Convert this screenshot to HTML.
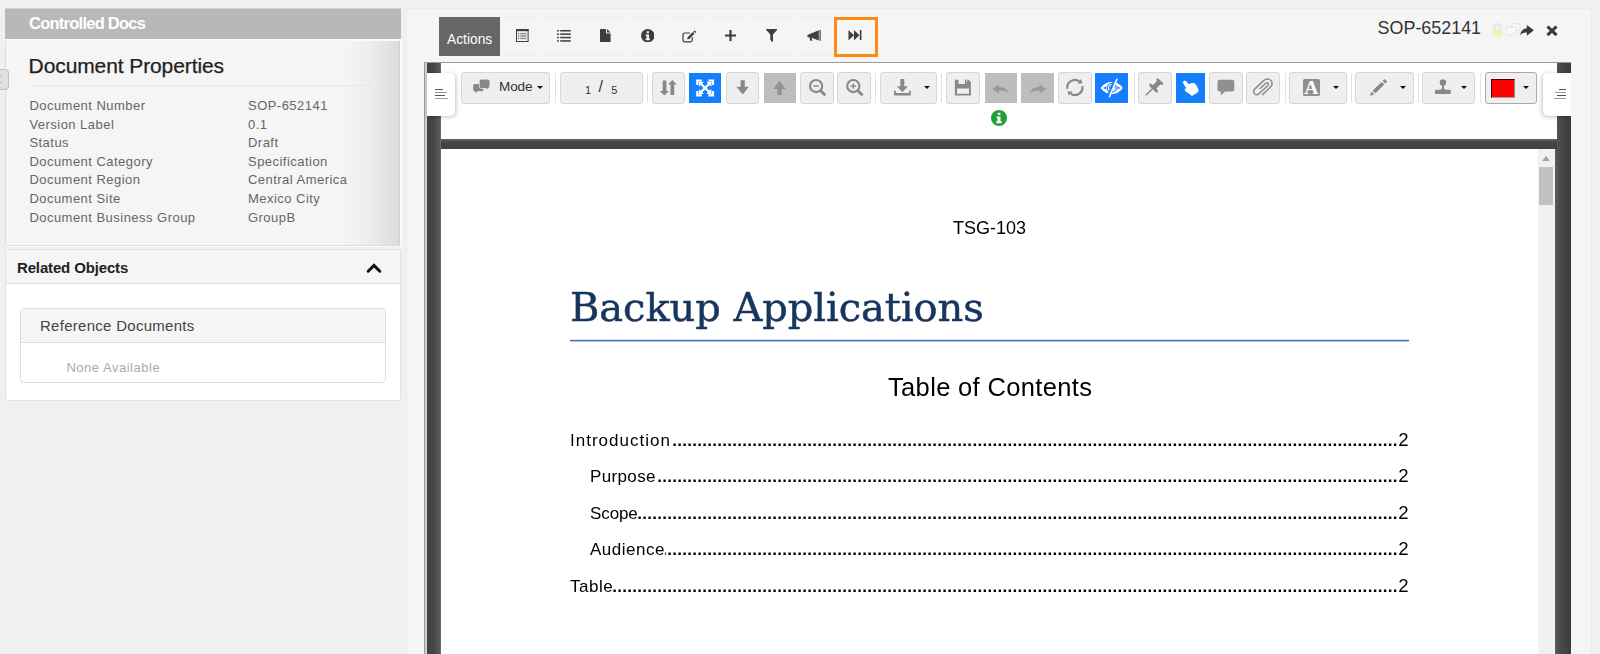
<!DOCTYPE html>
<html lang="en">
<head>
<meta charset="utf-8">
<title>Controlled Docs</title>
<style>
*{box-sizing:border-box;margin:0;padding:0}
html,body{width:1600px;height:654px;overflow:hidden}
body{background:#f0f0f0;font-family:"Liberation Sans",sans-serif;position:relative;color:#333}
.abs{position:absolute}
.t{position:absolute;white-space:nowrap;line-height:1}
/* left column */
#lhead{left:5px;top:8px;width:396px;height:31px;background:linear-gradient(180deg,#d0d0d0 0,#d0d0d0 1px,#b8b8b8 1px)}
#lhead .t{left:24px;top:7px;font-weight:bold;font-size:16.5px;color:#fff;letter-spacing:-0.75px}
#props{left:5px;top:41px;width:395px;height:205px;border-left:1px solid #ddd;border-bottom:1px solid #ddd;
 background:linear-gradient(90deg,#f5f5f5 0,#f5f5f5 86%,#ececec 93%,#dcdcdc 99.6%,#c8c8c8 100%)}
#props h1{position:absolute;left:22.6px;top:14px;font-size:21px;font-weight:normal;color:#222;line-height:1;white-space:nowrap;letter-spacing:-0.1px;-webkit-text-stroke:0.25px #222}
#props .hr{position:absolute;left:24px;top:44px;width:354px;height:1px;background:#e6e6e6}
.row{position:absolute;left:23.4px;margin-top:-1px;font-size:13px;color:#666;line-height:1;white-space:nowrap;letter-spacing:0.47px}
.row b{font-weight:normal;position:absolute;left:218.6px;top:0}
#sidetab{left:-3px;top:69px;width:12px;height:21px;background:#e0e0e0;border:1.5px solid #bdbdbd;border-radius:3.5px}
#rel{left:5px;top:249px;width:396px;height:152px;background:#fff;border:1px solid #e1e1e1;border-radius:3px}
#rel .hd{position:absolute;left:0;top:0;right:0;height:34px;background:#f5f5f5;border-bottom:1px solid #ddd}
#rel .hd .t{left:11px;top:9.5px;font-size:15px;font-weight:bold;color:#222;letter-spacing:-0.15px}
#ref{left:14px;top:58px;width:366px;height:75px;border:1px solid #ddd;border-radius:4px;background:#fff}
#ref .hd2{position:absolute;left:0;top:0;right:0;height:34px;background:#f5f5f5;border-bottom:1px solid #ddd;border-radius:3px 3px 0 0}
#ref .hd2 .t{left:19px;top:8.7px;font-size:15px;color:#444;letter-spacing:0.28px}
#ref .none{left:45.4px;top:51.5px;font-size:13px;color:#aaa;letter-spacing:0.52px}
/* right panel */
#rp{left:406px;top:8px;width:1186px;height:661px;background:#f5f5f5;border:1px solid #ebebeb;border-radius:5px}
#actions{left:439px;top:17px;width:61px;height:39.4px;background:#666;color:#fff}
#actions .t{left:8px;top:15.7px;font-size:13.8px;color:#fff}
.ib{position:absolute;top:17px;width:38px;height:38px;border-top:1px solid #ebebeb;border-bottom:1px solid #ebebeb}
.ib svg{position:absolute;left:50%;top:calc(50% - 0.9px)}
#hl{left:834px;top:16.8px;width:44px;height:40px;border:3.5px solid #ff8a12}
#docno{left:1377.6px;top:20.3px;font-size:17.9px;color:#333}
/* viewer */
#vw{left:424px;top:62px;width:1147px;height:600px;background:linear-gradient(90deg,#9a9a9a 0,#9a9a9a 1px,#cfcfcf 1px,#cfcfcf 3px,#434343 3px,#434343 9px,#5c5c5c 16px,#777 17px,#444 17px);border-top:1px solid #999}
#tb{left:441px;top:63px;width:1116px;height:77px;background:#fff}
#bar{left:441px;top:139px;width:1116px;height:10px;background:linear-gradient(180deg,#666 0,#444 30%,#444 100%)}
#doc{left:441px;top:149px;width:1097px;height:520px;background:#fff}
#sb{left:1538px;top:149px;width:17px;height:520px;background:#f1f1f1}
#sb .th{position:absolute;left:1px;top:18px;width:14px;height:38px;background:#c1c1c1}
#sb .ar{position:absolute;left:4px;top:7px;width:0;height:0;border-left:4.5px solid transparent;border-right:4.5px solid transparent;border-bottom:5px solid #a3a3a3}
.tab{position:absolute;background:#fff;top:73px;height:43px;box-shadow:1px 1px 4px rgba(0,0,0,.25)}
#ltab{left:427px;width:28px;border-radius:0 5px 5px 0}
#rtab{left:1543px;width:28px;border-radius:5px 0 0 5px;box-shadow:-1px 1px 4px rgba(0,0,0,.25);clip-path:inset(-8px 0 -8px -8px)}
.ln{position:absolute;height:1px}
/* toolbar buttons */
.btn{position:absolute;top:72px;height:32px;background:#efefef;border:1px solid #d6d6d6;border-radius:3px}
.btn.blue{background:#157efb;border-color:#157efb;border-radius:0}
.btn.dis{background:#bdbdbd;border-color:#bdbdbd;border-radius:0}
.btn svg{position:absolute}
.sep{position:absolute;top:73px;width:1px;height:30px;background:#e3e3e3}
.caret{position:absolute;width:0;height:0;border-left:3.7px solid transparent;border-right:3.7px solid transparent;border-top:3.8px solid #111;top:13px}
/* document */
.doc{font-family:"Liberation Sans",sans-serif;color:#000}
.gs,.tl{will-change:transform}
#tsg{left:953.2px;top:218.8px;font-size:18px;color:#000}
#title{left:570px;top:287.2px;font-family:"DejaVu Serif","Liberation Serif",serif;font-size:40px;color:#17365d;letter-spacing:-0.08px;-webkit-text-stroke:0.5px #17365d}
#uline{left:570px;top:339px;width:839px;height:3px;background:linear-gradient(180deg,rgba(63,118,184,.22) 0,rgba(63,118,184,.22) 1px,#3f76b8 1px,#3f76b8 2px,rgba(63,118,184,.42) 2px)}
#toc{left:887.5px;top:375.2px;font-size:25.5px;color:#000;letter-spacing:0.34px}
.tl{position:absolute;font-size:17px;color:#000;line-height:1.4;white-space:nowrap;display:flex;height:24px}
.tl .nm{flex:none}
.tl .dots{flex:1 1 0;min-width:0;overflow:hidden;letter-spacing:0.28px;direction:rtl;text-align:right;font-weight:bold}
.tl .pg{flex:none;padding-left:0.5px;font-size:18.6px;line-height:22px;letter-spacing:-1px}
</style>
</head>
<body>
<!-- LEFT COLUMN -->
<div id="lhead" class="abs"><div class="t">Controlled Docs</div></div>
<div class="abs" style="left:5px;top:39px;width:397px;height:208px;background:#f9f9f9"></div>
<div id="props" class="abs">
  <h1>Document Properties</h1>
  <div class="hr"></div>
  <div class="row" style="top:59px">Document Number<b>SOP-652141</b></div>
  <div class="row" style="top:77.6px">Version Label<b>0.1</b></div>
  <div class="row" style="top:96.2px">Status<b>Draft</b></div>
  <div class="row" style="top:114.8px">Document Category<b>Specification</b></div>
  <div class="row" style="top:133.4px">Document Region<b>Central America</b></div>
  <div class="row" style="top:152px">Document Site<b>Mexico City</b></div>
  <div class="row" style="top:170.6px">Document Business Group<b>GroupB</b></div>
</div>
<div id="sidetab" class="abs"><svg class="abs" style="left:-1.6px;top:3px" width="6" height="13" viewBox="0 0 6 13"><path d="M4.4 1.8 L0.4 5.8 L4.4 9.8" fill="none" stroke="#3f8fd0" stroke-width="1.3"/></svg></div>
<div id="rel" class="abs">
  <div class="hd"><div class="t">Related Objects</div>
    <svg class="abs" style="left:360px;top:12px" width="16" height="12" viewBox="0 0 16 12"><path d="M2.2 9.2 L8 3.4 L13.8 9.2" fill="none" stroke="#111" stroke-width="3" stroke-linecap="round" stroke-linejoin="miter"/></svg>
  </div>
  <div id="ref" class="abs">
    <div class="hd2"><div class="t">Reference Documents</div></div>
    <div class="t none">None Available</div>
  </div>
</div>

<!-- RIGHT PANEL -->
<div id="rp" class="abs"></div>
<div id="actions" class="abs"><div class="t">Actions</div></div>
<div id="iconbar">
<div class="ib" style="left:503.3px"><svg width="12.6" height="13" viewBox="0 0 12.6 13" style="margin-left:-6.3px;margin-top:-6.5px"><rect x="0.5" y="0.5" width="11.6" height="12" fill="none" stroke="#3e3e3e" stroke-width="1"/><rect x="0" y="0" width="12.6" height="2.2" fill="#3e3e3e"/><rect x="2" y="3.9" width="1.2" height="1.3" fill="#3e3e3e" opacity=".8"/><rect x="4.2" y="3.9" width="6.2" height="1.5" fill="#3e3e3e" opacity=".55"/><rect x="2" y="6.3" width="1.2" height="1.3" fill="#3e3e3e" opacity=".8"/><rect x="4.2" y="6.3" width="6.2" height="1.5" fill="#3e3e3e" opacity=".55"/><rect x="2" y="8.7" width="1.2" height="1.3" fill="#3e3e3e" opacity=".8"/><rect x="4.2" y="8.7" width="6.2" height="1.5" fill="#3e3e3e" opacity=".55"/></svg></div>
<div class="ib" style="left:545.1px"><svg width="13.8" height="11.8" viewBox="0 0 13.8 11.8" style="margin-left:-6.9px;margin-top:-5.3px"><rect x="0" y="0" width="1.8" height="1.5" fill="#3e3e3e"/><rect x="3.2" y="0" width="10.6" height="1.5" fill="#3e3e3e"/><rect x="0" y="3.4" width="1.8" height="1.5" fill="#3e3e3e"/><rect x="3.2" y="3.4" width="10.6" height="1.5" fill="#3e3e3e"/><rect x="0" y="6.8" width="1.8" height="1.5" fill="#3e3e3e"/><rect x="3.2" y="6.8" width="10.6" height="1.5" fill="#3e3e3e"/><rect x="0" y="10.2" width="1.8" height="1.5" fill="#3e3e3e"/><rect x="3.2" y="10.2" width="10.6" height="1.5" fill="#3e3e3e"/></svg></div>
<div class="ib" style="left:586.4px"><svg width="11" height="13" viewBox="0 0 11 13" style="margin-left:-5.5px;margin-top:-6.5px"><path d="M0.6 0 H6 V4.6 H10.6 V12.3 a.7 .7 0 0 1 -.7 .7 H.7 a.7 .7 0 0 1 -.7 -.7 V.6 A.6 .6 0 0 1 .6 0 Z M7 0 L10.6 3.6 H7 Z" fill="#3e3e3e"/></svg></div>
<div class="ib" style="left:628.5px"><svg width="13.5" height="13.5" viewBox="0 0 14 14" style="margin-left:-6.8px;margin-top:-6.2px"><circle cx="7" cy="7" r="7" fill="#3e3e3e"/><path d="M5.9 2.3 h2.3 v2.1 h-2.3z M4.9 5.6 h3.4 v4.3 h1 v1.7 h-4.6 v-1.7 h1 v-2.6 h-.8z" fill="#f5f5f5"/></svg></div>
<div class="ib" style="left:669.8px"><svg width="14" height="13" viewBox="0 0 14 13" style="margin-left:-7.0px;margin-top:-5.6px"><path d="M10.2 7.6 V10.3 a1.6 1.6 0 0 1 -1.6 1.6 H2.6 a1.6 1.6 0 0 1 -1.6 -1.6 V4.6 a1.6 1.6 0 0 1 1.6 -1.6 H7.6" fill="none" stroke="#3e3e3e" stroke-width="1.2" stroke-linecap="round"/><path d="M5.2 9.3 L5.6 7.2 L10.9 1.9 L12.6 3.6 L7.3 8.9 Z M11.5 1.3 l.6 -.6 a.6 .6 0 0 1 .85 0 l.85 .85 a.6 .6 0 0 1 0 .85 l-.6 .6 z" fill="#3e3e3e"/></svg></div>
<div class="ib" style="left:711.0px"><svg width="11" height="11" viewBox="0 0 11 11" style="margin-left:-5.5px;margin-top:-5.5px"><path d="M4.4 0 h2.2 v4.4 h4.4 v2.2 h-4.4 v4.4 h-2.2 v-4.4 h-4.4 v-2.2 h4.4z" fill="#3e3e3e"/></svg></div>
<div class="ib" style="left:752.7px"><svg preserveAspectRatio="none" width="11.3" height="13" viewBox="0 0 12 13" style="margin-left:-5.7px;margin-top:-6.5px"><path d="M0.3 0 H11.7 a.4 .4 0 0 1 .28 .68 L7.4 5.4 V12.6 a.4 .4 0 0 1 -.68 .28 L4.8 10.9 a.7 .7 0 0 1 -.2 -.5 V5.4 L0.02 .68 A.4 .4 0 0 1 .3 0Z" fill="#3e3e3e"/></svg></div>
<div class="ib" style="left:794.9px"><svg width="14.6" height="11" viewBox="0 0 14.6 11" style="margin-left:-7.3px;margin-top:-5.5px"><path d="M0.4 5 L11.8 0.3 V10.4 L4.6 7.7 L5.4 10.8 H3.3 L2.3 7.3 L0.4 6.9Z" fill="#3e3e3e"/><rect x="12.3" y="0" width="2" height="10.8" fill="#777"/></svg></div>
<div class="ib" style="left:836.5px"><svg width="14.2" height="10.4" viewBox="0 0 14 11" style="margin-left:-7.1px;margin-top:-5.2px"><path d="M0 0 L5.8 5.5 L0 11Z M5.8 0 L11.6 5.5 L5.8 11Z" fill="#3e3e3e"/><rect x="12" y="0" width="1.7" height="11" fill="#3e3e3e"/></svg></div>
</div><!--/iconbar-->
<div id="hl" class="abs"></div>
<div id="docno" class="t">SOP-652141</div>
<div id="hdricons">
<svg class="abs" style="left:1492px;top:23px" width="11" height="14" viewBox="0 0 11 14"><path d="M2.6 6.5 V4.1 a2.9 2.9 0 0 1 5.8 0 V6.5" fill="none" stroke="#e6e6e4" stroke-width="2.3"/><rect x="0.3" y="6.2" width="10.4" height="7" rx="1" fill="#f6f2bd"/></svg>
<svg class="abs" style="left:1506px;top:23px" width="15" height="14" viewBox="0 0 15 14"><path d="M4.4 0.6 H12.6 a1.4 1.4 0 0 1 1.4 1.4 V6.6 a1.4 1.4 0 0 1 -1.4 1.4 H11" fill="#f8f8f8" stroke="#e6e6e6" stroke-width="1.2"/><path d="M1.8 4.4 H9 a1.4 1.4 0 0 1 1.4 1.4 V9.6 a1.4 1.4 0 0 1 -1.4 1.4 H6.6 L4.4 13.6 L4 11 H1.8 a1.4 1.4 0 0 1 -1.4 -1.4 V5.8 A1.4 1.4 0 0 1 1.8 4.4Z" fill="#fafafa" stroke="#e6e6e6" stroke-width="1.2"/></svg>
<svg class="abs" style="left:1520.2px;top:25.3px" width="13.9" height="10.75" viewBox="0 0 13.9 10.75"><path d="M6.85 0 L13.9 5.25 L6.85 10.75 V7.5 C4 7.5 1.8 8.3 0 10.2 C0.8 5.8 3.4 3.4 6.85 3.2Z" fill="#3a3a3a"/></svg>
<svg class="abs" style="left:1546px;top:24.6px" width="12" height="11.6" viewBox="0 0 12 12" preserveAspectRatio="none"><path d="M1.5 1.5 L10.5 10.5 M10.5 1.5 L1.5 10.5" stroke="#3a3a3a" stroke-width="3.1" stroke-linecap="butt"/></svg>
</div><!--/hdricons-->

<!-- VIEWER -->
<div id="vw" class="abs"></div>
<div class="abs" style="left:1555px;top:63px;width:16px;height:600px;background:linear-gradient(90deg,#5e5e5e 0,#4a4a4a 5px,#3c3c3c 100%)"></div>
<div id="tb" class="abs"></div>
<div id="bar" class="abs"></div>
<div id="doc" class="abs"></div>
<div id="sb" class="abs"><div class="ar"></div><div class="th"></div></div>
<div id="ltab" class="tab">
  <div class="ln" style="left:8px;top:16px;width:8px;background:#555"></div>
  <div class="ln" style="left:8px;top:19px;width:12px;background:#999"></div>
  <div class="ln" style="left:8px;top:22px;width:10px;background:#555"></div>
  <div class="ln" style="left:8px;top:25px;width:13px;background:#999"></div>
</div>
<div id="rtab" class="tab">
  <div class="ln" style="left:16px;top:16px;width:7.4px;background:#555"></div>
  <div class="ln" style="left:12px;top:19px;width:11.4px;background:#999"></div>
  <div class="ln" style="left:14px;top:22px;width:9.4px;background:#555"></div>
  <div class="ln" style="left:11px;top:25px;width:12.4px;background:#999"></div>
</div>
<div id="toolbar">
<div class="btn " style="left:460.6px;width:89.4px;top:72.4px;height:31.2px;"><svg style="left:-1px;top:-1px" width="89.4" height="31.2" viewBox="0 0 89.4 31.2"><path d="M13.8 12 H20.8 a1.7 1.7 0 0 1 1.7 1.7 V17.5 a1.7 1.7 0 0 1 -1.7 1.7 H16.4 L14.3 21.4 V19.2 H13.8 a1.7 1.7 0 0 1 -1.7 -1.7 V13.7 a1.7 1.7 0 0 1 1.7 -1.7Z" fill="#888"/><path d="M20.3 7.4 H26.8 a1.7 1.7 0 0 1 1.7 1.7 V14.3 a1.7 1.7 0 0 1 -1.7 1.7 H26.5 V17.6 L24.7 16 H20.3 a1.7 1.7 0 0 1 -1.7 -1.7 V9.1 a1.7 1.7 0 0 1 1.7 -1.7Z" fill="#888" stroke="#efefef" stroke-width="1.4" paint-order="stroke"/></svg><div class="t" style="left:37.4px;top:6.7px;font-size:13.5px;color:#333;letter-spacing:-0.1px">Mode</div><div class="caret" style="left:75.3px;top:12.9px"></div></div>
<div class="sep" style="left:554.5px"></div>
<div class="btn " style="left:559.5px;width:83.0px;top:72.4px;height:31.2px;"><div class="t" style="left:24.5px;top:11.8px;font-size:11px;color:#333">1</div><div class="t" style="left:38px;top:5.6px;font-size:16px;color:#333">/</div><div class="t" style="left:50.8px;top:11.8px;font-size:11px;color:#333">5</div></div>
<div class="sep" style="left:646.5px"></div>
<div class="btn " style="left:651.5px;width:33.0px;top:72.4px;height:31.2px;"><svg style="left:-1px;top:-1px" width="33.0" height="31.2" viewBox="0 0 33.0 31.2"><path d="M10.7 8.4 H14.4 V18.9 H17.1 L12.4 23.6 L7.7 18.9 H10.7Z M18.5 23.1 H22.2 V12.6 H24.7 L20.3 8.1 L16 12.6 H18.5Z" fill="#888"/></svg></div>
<div class="btn blue" style="left:689.0px;width:32.4px;top:73px;height:30px;"><svg style="left:-1px;top:-1px" width="32.4" height="30" viewBox="0 0 32.4 30"><path d="M8.3 12 V7.5 H12.9 M19.4 7.5 H24 V12 M24 17.9 V22.4 H19.4 M12.9 22.4 H8.3 V17.9" fill="none" stroke="#fff" stroke-width="2.2"/><path d="M11.4 10.2 L20.9 19.6 M20.9 10.2 L11.4 19.6" stroke="#fff" stroke-width="2.3"/><path d="M9.9 8.8 H15 L9.9 13.8Z M22.4 8.8 V13.8 L17.3 8.8Z M22.4 21 H17.3 L22.4 16Z M9.9 21 V16 L15 21Z" fill="#fff"/></svg></div>
<div class="btn " style="left:725.5px;width:33.5px;top:72.4px;height:31.2px;"><svg style="left:-1px;top:-1px" width="33.5" height="31.2" viewBox="0 0 33.5 31.2"><path d="M14.6 8.3 H18.8 V14.8 H22.9 L16.7 22.6 L10.4 14.8 H14.6Z" fill="#888"/></svg></div>
<div class="btn dis" style="left:763.8px;width:32.1px;top:73px;height:30px;"><svg style="left:-1px;top:-1px" width="32.1" height="30" viewBox="0 0 32.1 30"><path d="M13.3 22 H17.7 V15.9 H21.8 L15.5 7.8 L9.1 15.9 H13.3Z" fill="#939393"/></svg></div>
<div class="btn " style="left:799.5px;width:34.0px;top:72.4px;height:31.2px;"><svg style="left:-1px;top:-1px" width="34.0" height="31.2" viewBox="0 0 34.0 31.2"><circle cx="16.1" cy="14.05" r="6.1" fill="none" stroke="#888" stroke-width="2.1"/><path d="M20.700000000000003 18.65 L25.3 23.25" stroke="#888" stroke-width="2.8"/><path d="M13.3 14.05 H18.900000000000002" stroke="#888" stroke-width="1.5"/></svg></div>
<div class="btn " style="left:836.5px;width:34.0px;top:72.4px;height:31.2px;"><svg style="left:-1px;top:-1px" width="34.0" height="31.2" viewBox="0 0 34.0 31.2"><circle cx="16.3" cy="14.05" r="6.1" fill="none" stroke="#888" stroke-width="2.1"/><path d="M20.9 18.65 L25.5 23.25" stroke="#888" stroke-width="2.8"/><path d="M13.5 14.05 H19.1" stroke="#888" stroke-width="1.5"/><path d="M16.3 11.4 V16.7" stroke="#888" stroke-width="1.5"/></svg></div>
<div class="sep" style="left:874.6px"></div>
<div class="btn " style="left:879.8px;width:56.9px;top:72.4px;height:31.2px;"><svg style="left:-1px;top:-1px" width="56.9" height="31.2" viewBox="0 0 56.9 31.2"><path d="M20.4 7.1 H24.3 V14.2 H27.9 L22.4 20.3 L16.9 14.2 H20.4Z" fill="#888"/><path d="M14 18.8 H15.8 V21 H29 V18.8 H30.8 V23.5 H14Z" fill="#888"/></svg><div class="caret" style="left:43.0px;top:12.9px"></div></div>
<div class="sep" style="left:941.2px"></div>
<div class="btn " style="left:946.2px;width:33.6px;top:72.4px;height:31.2px;"><svg style="left:-1px;top:-1px" width="33.6" height="31.2" viewBox="0 0 33.6 31.2"><path fill-rule="evenodd" d="M8.9 7.8 H12.5 V12.1 H18.9 V7.8 H22.6 L24.9 10.1 V23.5 H8.9Z M11 16.4 V21.8 H23 V16.4Z" fill="#888"/><rect x="20" y="7.8" width="1.3" height="2.6" fill="#c9c9c9"/></svg></div>
<div class="btn dis" style="left:984.8px;width:31.9px;top:73px;height:30px;"><svg style="left:-1px;top:-1px" width="31.9" height="30" viewBox="0 0 31.9 30"><path d="M7.4 15.9 L14 11.2 V14 C19.2 14.1 22.4 16 24.2 20.4 C21.4 17.9 18.2 17.3 14 17.6 V20.6Z" fill="#999"/></svg></div>
<div class="btn dis" style="left:1021.0px;width:32.8px;top:73px;height:30px;"><svg style="left:-1px;top:-1px" width="32.8" height="30" viewBox="0 0 32.8 30"><path d="M25.2 15.9 L18.6 11.2 V14 C13.4 14.1 10.2 16 8.4 20.4 C11.2 17.9 14.4 17.3 18.6 17.6 V20.6Z" fill="#999"/></svg></div>
<div class="btn " style="left:1057.5px;width:34.0px;top:72.4px;height:31.2px;"><svg style="left:-1px;top:-1px" width="34.0" height="31.2" viewBox="0 0 34.0 31.2"><path d="M9.37 16.82 A7.6 7.6 0 0 1 21.21 9.27" fill="none" stroke="#888" stroke-width="2.2"/><path d="M22.95 6.90 L24.45 11.60 L19.55 11.60Z" fill="#888"/><path d="M24.33 14.18 A7.6 7.6 0 0 1 12.49 21.73" fill="none" stroke="#888" stroke-width="2.2"/><path d="M10.45 23.60 L9.55 19.40 L14.65 19.20Z" fill="#888"/></svg></div>
<div class="btn blue" style="left:1095.3px;width:32.7px;top:73px;height:30px;"><svg style="left:-1px;top:-1px" width="32.7" height="30" viewBox="0 0 32.7 30"><path d="M5.75 14.90 C8.75 10.50 12.75 8.90 16.75 8.90 C20.75 8.90 24.75 10.50 27.75 14.90 C24.75 19.30 20.75 20.90 16.75 20.90 C12.75 20.90 8.75 19.30 5.75 14.90Z" fill="#fff"/><circle cx="16.75" cy="14.9" r="4.4" fill="none" stroke="#157efb" stroke-width="1.2"/><path d="M14.55 15.50 A2.3 2.3 0 0 1 16.55 12.70" fill="none" stroke="#157efb" stroke-width="1.1"/><path d="M8.15 14.90 L11.15 13.30 L11.15 16.50Z M25.35 14.90 L22.35 13.30 L22.35 16.50Z" fill="#157efb"/><path d="M20.65 6.50 L13.35 23.70" stroke="#157efb" stroke-width="3.6"/><path d="M21.85 6.30 L14.55 23.50" stroke="#fff" stroke-width="1.7" stroke-linecap="round"/></svg></div>
<div class="sep" style="left:1133.5px"></div>
<div class="btn " style="left:1138.0px;width:33.8px;top:72.4px;height:31.2px;"><svg style="left:-1px;top:-1px" width="33.8" height="31.2" viewBox="0 0 33.8 31.2"><path d="M8.3 22.7 L15.5 15.7" stroke="#888" stroke-width="1.5" stroke-linecap="round"/><path d="M12.6 13.2 L18.6 19" stroke="#888" stroke-width="3" stroke-linecap="round"/><path d="M15.6 16 L21.5 9.9" stroke="#888" stroke-width="4.8"/><path d="M19.6 7.8 L23.9 11.7" stroke="#888" stroke-width="2.6" stroke-linecap="round"/></svg></div>
<div class="btn blue" style="left:1175.8px;width:29.7px;top:73px;height:30px;"><svg style="left:-1px;top:-1px" width="29.7" height="30" viewBox="0 0 29.7 30"><path d="M7.92 8.3 L9.39 8.06 L12.82 11.73 L15.51 10.5 L18.69 10.75 L20.4 13.19 L22.12 17.11 L21.87 18.82 L16.0 22.5 L12.82 20.05 L9.39 17.84 L9.15 16.62 L10.6 14.9 L7.19 9.52Z" fill="#fff" stroke="#fff" stroke-width="1" stroke-linejoin="round"/></svg></div>
<div class="btn " style="left:1209.3px;width:33.4px;top:72.4px;height:31.2px;"><svg style="left:-1px;top:-1px" width="33.4" height="31.2" viewBox="0 0 33.4 31.2"><path d="M10.5 7.7 H23.3 a2 2 0 0 1 2 2 V17.6 a2 2 0 0 1 -2 2 H16 L11.9 23.6 L11.7 19.6 H10.5 a2 2 0 0 1 -2 -2 V9.7 a2 2 0 0 1 2 -2Z" fill="#909090"/></svg></div>
<div class="btn " style="left:1246.3px;width:33.5px;top:72.4px;height:31.2px;"><svg style="left:-1px;top:-1px" width="33.5" height="31.2" viewBox="0 0 33.5 31.2"><path d="M16.5 22.6 L24.3 15.3 C27 12.6 26.4 9.4 24.4 8 C22.4 6.6 19.8 6.8 17.9 8.4 L9.1 16.6 C7 18.6 7.4 20.8 8.6 22 C9.9 23.2 12 23 13.5 21.2 L21.6 13.8 C22.8 12.6 22.6 11.6 22 11.1 C21.3 10.6 20.6 10.7 19.8 11.3 L14 16.5" fill="none" stroke="#8a8a8a" stroke-width="1.5" stroke-linecap="round"/></svg></div>
<div class="sep" style="left:1284.5px"></div>
<div class="btn " style="left:1289.0px;width:57.8px;top:72.4px;height:31.2px;"><div class="abs" style="left:13.4px;top:5.9px;width:17.1px;height:16.7px;background:#8f8f8f;border-radius:1.5px"></div><div class="t" style="left:14.3px;top:4.2px;font-family:'Liberation Serif',serif;font-weight:bold;font-size:19.5px;color:#fff">A</div><div class="caret" style="left:42.6px;top:12.9px"></div></div>
<div class="sep" style="left:1351.3px"></div>
<div class="btn " style="left:1355.0px;width:58.5px;top:72.4px;height:31.2px;"><svg style="left:-1px;top:-1px" width="58.5" height="31.2" viewBox="0 0 58.5 31.2"><path d="M14.87 23.83 L16.33 19.67 L19.52 22.36Z" fill="#888"/><path d="M17.56 18.69 L26.61 9.88 L29.31 12.57 L20.5 21.14Z" fill="#888"/><path d="M27.59 8.9 L29.55 6.94 L32.24 9.63 L30.28 11.59Z" fill="#888"/></svg><div class="caret" style="left:43.7px;top:12.9px"></div></div>
<div class="sep" style="left:1418.3px"></div>
<div class="btn " style="left:1422.0px;width:53.4px;top:72.4px;height:31.2px;"><svg style="left:-1px;top:-1px" width="53.4" height="31.2" viewBox="0 0 53.4 31.2"><circle cx="20.96" cy="10.6" r="3.25" fill="#888"/><rect x="19.95" y="12.5" width="2" height="4.5" fill="#888"/><path d="M18.7 17.9 C18.9 16.9 19.6 16.4 20.4 16.4 H21.5 C22.3 16.4 23 16.9 23.2 17.9Z" fill="#888"/><rect x="12.9" y="17.7" width="15.9" height="4.4" rx="1" fill="#888"/></svg><div class="caret" style="left:38.3px;top:12.9px"></div></div>
<div class="sep" style="left:1480.4px"></div>
<div class="btn " style="left:1485.0px;width:51.8px;top:72.4px;height:31.2px;border-color:#a9a9a9;"><div class="abs" style="left:4.9px;top:5.4px;width:24px;height:19.2px;background:#f00;border:1px solid #8c8c8c;border-top-color:#400;border-left-color:#300;border-bottom-color:#b99"></div><div class="caret" style="left:36.5px;top:12.2px"></div></div>
<div class="abs" style="left:991px;top:110.2px;width:16px;height:16px"><svg width="16" height="16" viewBox="0 0 14 14" style=""><circle cx="7" cy="7" r="7" fill="#21a038"/><path d="M5.9 2.3 h2.3 v2.1 h-2.3z M4.9 5.6 h3.4 v4.3 h1 v1.7 h-4.6 v-1.7 h1 v-2.6 h-.8z" fill="#fff"/></svg></div>
</div><!--/toolbar-->

<!-- DOCUMENT CONTENT -->
<div id="tsg" class="t doc gs">TSG-103</div>
<div id="title" class="t gs">Backup Applications</div>
<div id="uline" class="abs"></div>
<div id="toc" class="t doc gs">Table of Contents</div>
<div id="toclines">
<div class="tl" style="left:570.4px;top:429.2px;width:837.5px"><span class="nm" style="letter-spacing:1.0px">Introduction</span><span class="dots">......................................................................................................................................................................................................................................</span><span class="pg">2</span></div>
<div class="tl" style="left:590.4px;top:464.6px;width:817.5px"><span class="nm" style="letter-spacing:0.36px">Purpose</span><span class="dots">......................................................................................................................................................................................................................................</span><span class="pg">2</span></div>
<div class="tl" style="left:590.4px;top:501.6px;width:817.5px"><span class="nm" style="letter-spacing:-0.1px">Scope</span><span class="dots">......................................................................................................................................................................................................................................</span><span class="pg">2</span></div>
<div class="tl" style="left:590.4px;top:538.0px;width:817.5px"><span class="nm" style="letter-spacing:0.5px">Audience</span><span class="dots">......................................................................................................................................................................................................................................</span><span class="pg">2</span></div>
<div class="tl" style="left:570.4px;top:575.2px;width:837.5px"><span class="nm" style="letter-spacing:0.5px">Table</span><span class="dots">......................................................................................................................................................................................................................................</span><span class="pg">2</span></div>
</div><!--/toclines-->
</body>
</html>
